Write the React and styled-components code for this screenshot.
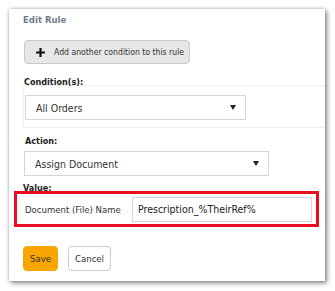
import React from 'react'
import styled, { createGlobalStyle } from 'styled-components'

const Global = createGlobalStyle`
  body {
    margin: 0;
    background: #fff;
    font-family: "DejaVu Sans Condensed", "DejaVu Sans", sans-serif;
    font-stretch: condensed;
  }
`

const Page = styled.div`
  padding: 9px 0 0 9px;
  width: 335px;
  height: 291px;
  box-sizing: border-box;
  overflow: hidden;
`

const Panel = styled.div`
  width: 316px;
  height: 272px;
  background: #fff;
  box-shadow: 2px 2px 5px rgba(0, 0, 0, 0.45), 0 0 3px rgba(0, 0, 0, 0.25);
  box-sizing: border-box;
  padding: 4px 6px 0 5px;
  overflow: hidden;
`

const Title = styled.h3`
  margin: 0 0 0 9px;
  height: 14px;
  line-height: 14px;
  font-size: 9.5px;
  font-weight: bold;
  color: #6e7d89;
`

const Section = styled.div`
  padding-left: ${p => p.indent || 9}px;
`

const AddButton = styled.button`
  display: flex;
  align-items: center;
  gap: 9px;
  margin: 13px 0 0 1px;
  width: 166px;
  height: 24px;
  padding: 0 0 0 11px;
  background: #e7e7e7;
  border: 1px solid #c9c9c9;
  border-radius: 4px;
  font-family: inherit;
  font-size: 8.6px;
  white-space: nowrap;
  color: #333;
  box-sizing: border-box;
`

const Label = styled.div`
  font-size: 9px;
  font-weight: bold;
  color: #222;
  height: ${p => p.h || 12}px;
  line-height: ${p => p.h || 12}px;
  margin-top: ${p => p.mt || 0}px;
  padding-left: ${p => p.pl || 0}px;
`

const ConditionBox = styled.div`
  margin: -2px -10px 0 0;
  border: 1px solid #eee;
  border-right: none;
  padding: 9px 0 7px 1px;
`

const Select = styled.div`
  display: flex;
  align-items: center;
  justify-content: space-between;
  width: ${p => p.w}px;
  height: 25px;
  box-sizing: border-box;
  border: 1px solid #d6d6d6;
  padding: 0 9px 0 10px;
  font-size: 10.5px;
  color: #333;
  margin-top: ${p => p.mt || 0}px;
  margin-left: ${p => p.ml || 0}px;
`

const Caret = styled.span`
  width: 0;
  height: 0;
  border-left: 3px solid transparent;
  border-right: 3px solid transparent;
  border-top: 5px solid #222;
`

const Highlight = styled.div`
  margin-top: -3px;
  height: 36px;
  width: 305px;
  box-sizing: border-box;
  border: 3px solid #e8101f;
  display: flex;
  align-items: center;
  padding: 0 4px 0 8px;
`

const FieldLabel = styled.span`
  width: 107px;
  font-size: 9.5px;
  color: #333;
`

const TextInput = styled.div`
  flex: 1;
  height: 25px;
  box-sizing: border-box;
  border: 1px solid #d6d6d6;
  display: flex;
  align-items: center;
  padding-left: 5px;
  font-size: 10.5px;
  color: #222;
`

const Actions = styled.div`
  display: flex;
  gap: 10px;
  margin: 19px 0 0 9px;
`

const Btn = styled.button`
  height: 25px;
  width: ${p => p.w}px;
  padding: 0;
  border-radius: 4px;
  font-family: inherit;
  font-size: 9.5px;
  color: #333;
  background: ${p => (p.primary ? '#f8a500' : '#fff')};
  border: 1px solid ${p => (p.primary ? '#f8a500' : '#ccc')};
`

function Plus() {
  return (
    <svg width="9" height="9" viewBox="0 0 9 9">
      <path d="M3.4 0h2.2v3.4H9v2.2H5.6V9H3.4V5.6H0V3.4h3.4z" fill="#111" />
    </svg>
  )
}

export default function App() {
  return (
    <Page>
      <Global />
      <Panel>
        <Title>Edit Rule</Title>
        <Section>
          <AddButton>
            <Plus />
            Add another condition to this rule
          </AddButton>
          <Label mt={13} pl={1} h={10}>Condition(s):</Label>
        </Section>
        <Section indent={9}>
          <ConditionBox>
            <Select w={221}>
              All Orders
              <Caret />
            </Select>
          </ConditionBox>
          <Label mt={7} pl={2}>Action:</Label>
          <Select w={245} mt={4} ml={1}>
            Assign Document
            <Caret />
          </Select>
          <Label mt={6}>Value:</Label>
        </Section>
        <Highlight>
          <FieldLabel>Document (File) Name</FieldLabel>
          <TextInput>Prescription_%TheirRef%</TextInput>
        </Highlight>
        <Actions>
          <Btn primary w={35}>Save</Btn>
          <Btn w={43}>Cancel</Btn>
        </Actions>
      </Panel>
    </Page>
  )
}
